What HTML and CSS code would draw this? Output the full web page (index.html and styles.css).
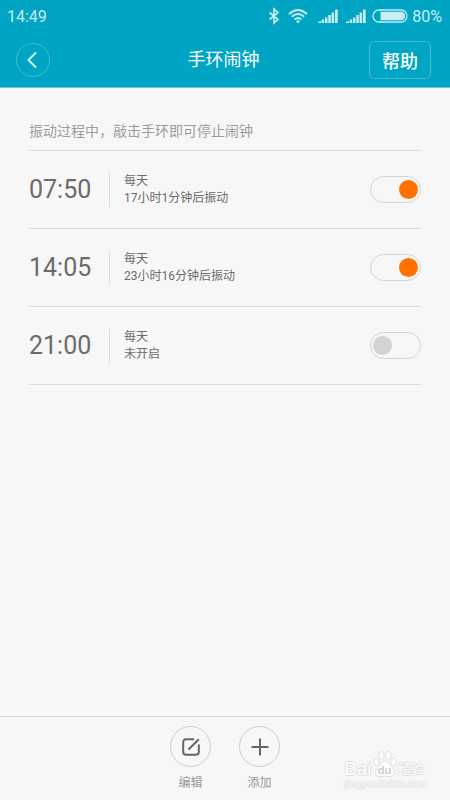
FILE: index.html
```html
<!DOCTYPE html>
<html lang="zh-CN">
<head>
<meta charset="utf-8">
<meta name="viewport" content="width=device-width, initial-scale=1">
<title>手环闹钟</title>
<link rel="stylesheet" href="styles.css">
</head>
<body>
<header class="top">
  <div class="status">
    <span>14:49</span>
    <div class="status-icons">
      <svg class="bluetooth" width="12" height="18" viewBox="0 0 12 18"><path d="M1.500 5.500 10 12.500 6 16V2l4 3.500-8.500 7" fill="none" stroke="currentColor" stroke-width="1.700"/></svg>
      <svg class="wifi" width="20" height="16" viewBox="0 0 20 16"><g fill="none" stroke="currentColor" stroke-width="2"><path d="M1 6Q10-2 19 6"/><path d="M3.800 8.800Q10 3.200 16.200 8.800"/><path d="M6.600 11.500Q10 8.400 13.400 11.500"/></g><circle cx="10" cy="13.500" r="1.600" fill="currentColor"/></svg>
      <svg class="signal" width="20" height="14" viewBox="0 0 20 14"><path d="M0 14v-1l3-1v2zM3.700 10.500h2.500V14H3.700zM7 8.500h2.500V14H7zM10.300 6h2.500v8h-2.500zM13.600 3.500h2.500V14h-2.500zM17 .500h2.700V14H17z" fill="currentColor"/></svg>
      <svg class="signal" width="20" height="14" viewBox="0 0 20 14"><path d="M0 14v-1l3-1v2zM3.700 10.500h2.500V14H3.700zM7 8.500h2.500V14H7zM10.300 6h2.500v8h-2.500zM13.600 3.500h2.500V14h-2.500zM17 .500h2.700V14H17z" fill="currentColor"/></svg>
      <svg class="battery" width="36" height="14" viewBox="0 0 36 14"><rect x="1" y="1" width="34" height="12" rx="6" fill="none" stroke="currentColor" stroke-width="1.300"/><path d="M8.500 2.800H29a4.200 4.200 0 0 1 0 8.400H8.500z" fill="currentColor"/></svg>
      <span>80%</span>
    </div>
  </div>
  <div class="bar">
    <button class="back" type="button" aria-label="返回"><svg width="10" height="18" viewBox="0 0 10 18"><path d="M9 1.500 1.500 9 9 16.500" fill="none" stroke="currentColor" stroke-width="2"/></svg></button>
    <h1>手环闹钟</h1>
    <button class="help" type="button">帮助</button>
  </div>
</header>
<main>
  <p class="hint">振动过程中，敲击手环即可停止闹钟</p>
  <ul class="alarms">
    <li>
      <label class="time" for="alarm1">07:50</label>
      <div class="info"><span>每天</span><span>17小时1分钟后振动</span></div>
      <input class="toggle" id="alarm1" type="checkbox" checked>
    </li>
    <li>
      <label class="time" for="alarm2">14:05</label>
      <div class="info"><span>每天</span><span>23小时16分钟后振动</span></div>
      <input class="toggle" id="alarm2" type="checkbox" checked>
    </li>
    <li>
      <label class="time" for="alarm3">21:00</label>
      <div class="info"><span>每天</span><span>未开启</span></div>
      <input class="toggle" id="alarm3" type="checkbox">
    </li>
  </ul>
</main>
<footer>
  <button class="action" type="button">
    <span class="ring"><svg width="18" height="18" viewBox="0 0 18 18"><path d="M12 1.200H4A2.800 2.800 0 0 0 1.200 4v10A2.800 2.800 0 0 0 4 16.800h10a2.800 2.800 0 0 0 2.800-2.800V6.500M6.500 11.500 16.800 1.200" fill="none" stroke="currentColor" stroke-width="2"/></svg></span>
    <span>编辑</span>
  </button>
  <button class="action" type="button">
    <span class="ring"><svg width="18" height="18" viewBox="0 0 18 18"><path d="M9 .500v17M.500 9h17" fill="none" stroke="currentColor" stroke-width="2"/></svg></span>
    <span>添加</span>
  </button>
  <div class="watermark">
    <div class="brand">
      <span class="latin">Bai</span>
      <span class="paw"><svg width="24" height="28" viewBox="0 0 24 28"><g fill="#fff" stroke="#dcdcdc"><ellipse cx="3.500" cy="12" rx="2.800" ry="3.800"/><ellipse cx="8.500" cy="5.500" rx="2.800" ry="4"/><ellipse cx="15.500" cy="5.500" rx="2.800" ry="4"/><ellipse cx="20.500" cy="12" rx="2.800" ry="3.800"/><path d="M12 11c-4 0-4 4-7 6.500-4 3-3 9 2 9 2 0 3-.5 5-.5s3 .5 5 .5c5 0 6-6 2-9-3-2.500-3-6.500-7-6.500z"/></g></svg><span class="du">du</span></span>
      <span class="cjk">经验</span>
    </div>
    <div class="site">jingyan.baidu.com</div>
  </div>
</footer>
</body>
</html>
```
FILE: styles.css
```css
* {
  box-sizing: border-box;
}

body {
  margin: 0;
  min-height: 100vh;
  display: flex;
  flex-direction: column;
  background: #f7f7f7;
  color: #6b6b6b;
  font-family: Roboto, "Noto Sans CJK SC", sans-serif;
}

button {
  padding: 0;
  background: none;
  border: 0;
  color: inherit;
  font: inherit;
}

svg {
  display: block;
}

.top {
  background: #00a5c4;
  color: #fff;
  border-bottom: 1px solid #70c6d6;
}

.status {
  display: flex;
  align-items: center;
  justify-content: space-between;
  height: 32px;
  padding: 0 8px 0 7px;
  font-size: 16px;
  color: #c8ecf2;
}

.status-icons {
  display: flex;
  align-items: center;
}

.bluetooth,
.signal {
  margin-right: 8px;
}

.wifi {
  margin-right: 10px;
}

.battery {
  margin-right: 4px;
}

.signal + .battery {
  margin-left: -2px;
}

.bar {
  display: grid;
  grid-template-columns: 1fr auto 1fr;
  align-items: center;
  height: 55px;
  padding: 0 19px 0 16px;
}

.back {
  display: flex;
  align-items: center;
  justify-content: center;
  width: 34px;
  height: 34px;
  padding-right: 3px;
  border: 1px solid #43bad0;
  border-radius: 50%;
  color: #d9f2f6;
}

h1 {
  margin: 0;
  font-size: 18px;
  line-height: 24px;
  font-weight: 400;
}

.help {
  justify-self: end;
  width: 62px;
  height: 38px;
  border: 1px solid #43bad0;
  border-radius: 6px;
  font-size: 18px;
  font-weight: 500;
}

main {
  flex: 1;
  padding: 32px 29px 0;
}

.hint {
  margin: 0;
  padding-bottom: 8px;
  border-bottom: 1px solid #dcdcdc;
  color: #9c9c9c;
  font-size: 14px;
  line-height: 22px;
}

.alarms {
  margin: 0;
  padding: 0;
  list-style: none;
}

.alarms li {
  display: flex;
  align-items: center;
  height: 78px;
  border-bottom: 1px solid #dcdcdc;
}

.time {
  width: 80px;
  font-size: 25px;
}

.info {
  display: flex;
  flex-direction: column;
  flex: 1;
  padding-left: 14px;
  border-left: 1px solid #dcdcdc;
  font-size: 12px;
  line-height: 17px;
}

.toggle {
  appearance: none;
  display: flex;
  align-items: center;
  width: 51px;
  height: 27px;
  margin: 0;
  padding: 0 2px;
  border: 1px solid #d3d3d3;
  border-radius: 14px;
}

.toggle::before {
  content: "";
  width: 19px;
  height: 19px;
  border-radius: 50%;
  background: #d3d3d3;
}

.toggle:checked {
  justify-content: flex-end;
}

.toggle:checked::before {
  background: #ff7200;
}

footer {
  position: relative;
  display: flex;
  justify-content: center;
  gap: 28px;
  height: 84px;
  padding-top: 9px;
  border-top: 1px solid #d8d8d8;
}

.action {
  display: flex;
  flex-direction: column;
  align-items: center;
  gap: 7px;
  color: #999;
  font-size: 12px;
  line-height: 18px;
}

.ring {
  display: flex;
  align-items: center;
  justify-content: center;
  width: 41px;
  height: 41px;
  border: 1px solid #ccc;
  border-radius: 50%;
  color: #666;
}

.watermark {
  position: absolute;
  right: 24px;
  bottom: 11px;
  color: #fff;
  text-shadow: 1px 0 #dfdfdf, -1px 0 #dfdfdf, 0 1px #dfdfdf, 0 -1px #dfdfdf;
  white-space: nowrap;
}

.brand {
  display: flex;
  align-items: flex-end;
  gap: 1px;
  height: 28px;
}

.latin {
  font: 400 19px/18px "Liberation Sans", sans-serif;
}

.paw {
  position: relative;
}

.du {
  position: absolute;
  inset: auto 0 0;
  color: #ccc;
  font: 700 11px/16px "Liberation Sans", sans-serif;
  text-align: center;
  text-shadow: none;
}

.cjk {
  font-size: 13px;
  line-height: 18px;
}

.site {
  font: 11px/11px "Liberation Serif", serif;
}
```
